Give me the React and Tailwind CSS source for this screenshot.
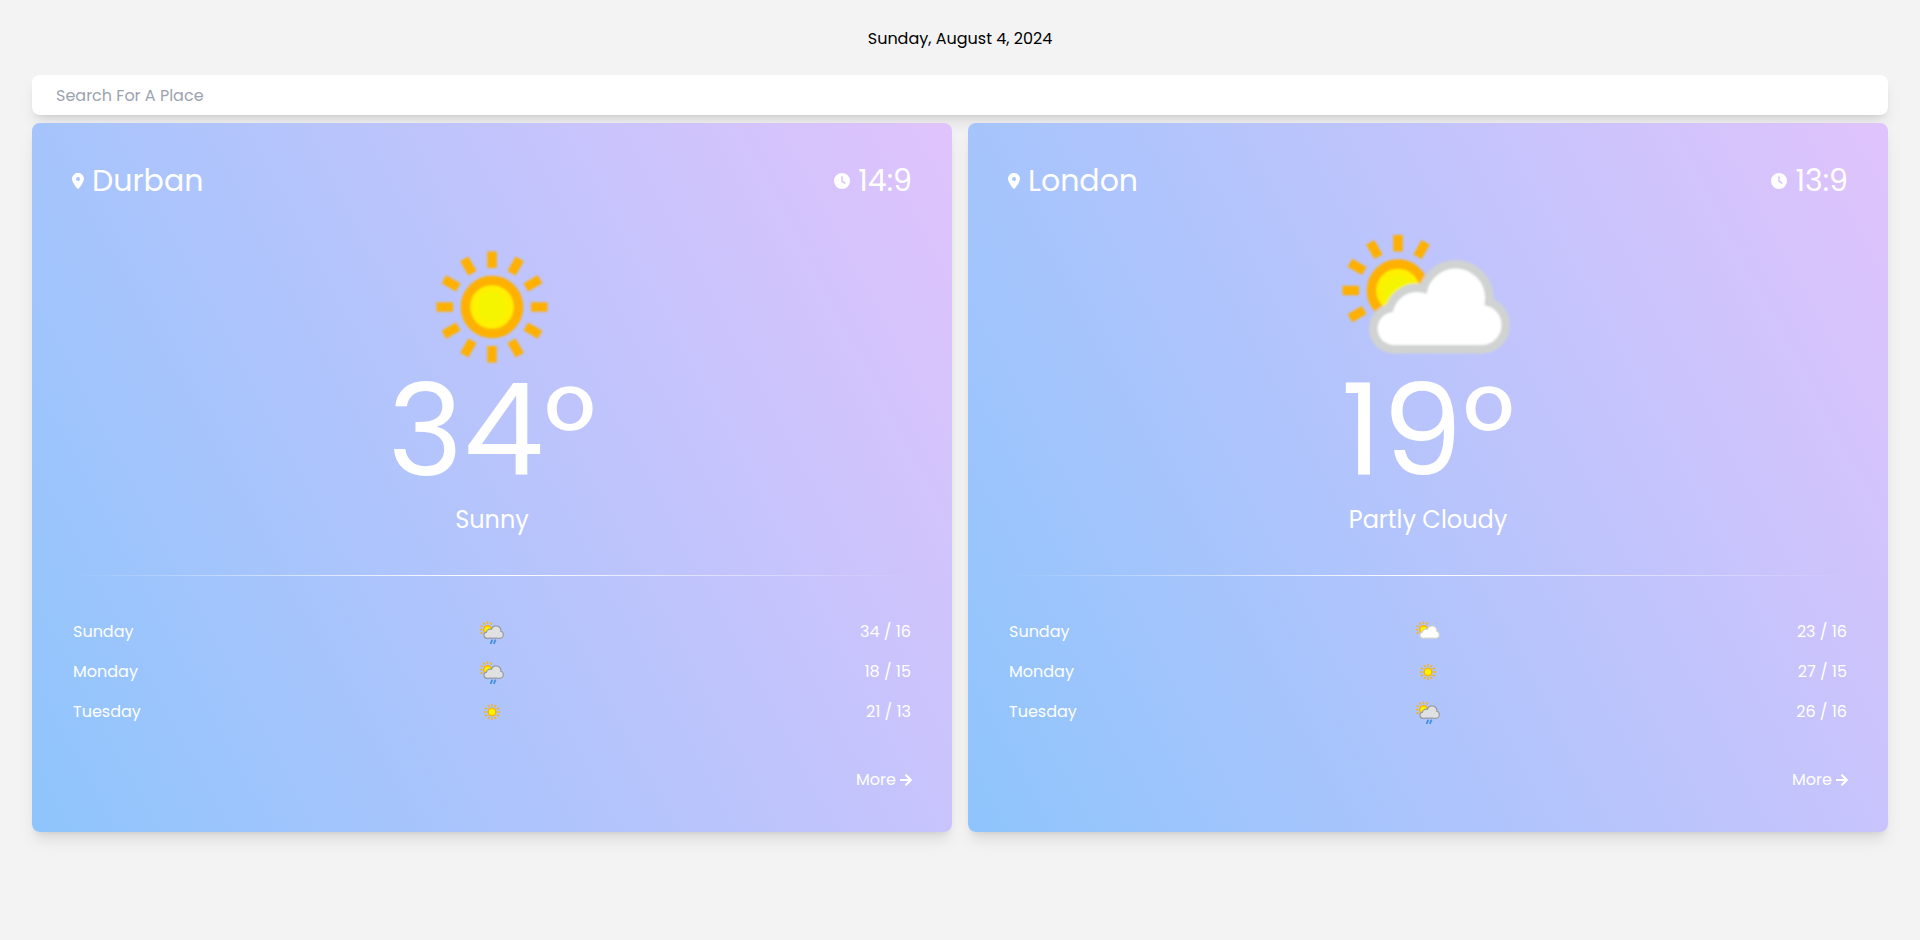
import { FaArrowRight } from "react-icons/fa";
import { FaClock, FaLocationDot } from "react-icons/fa6";

const SUN_RAYS = [0, 30, 60, 90, 120, 150, 180, 210, 240, 270, 300, 330];
const PARTIAL_RAYS = [240, 270, 300, 330, 0, 30];

function Sun({ cx, cy, rays }) {
  return (
    <g transform={`translate(${cx} ${cy})`}>
      {rays.map((angle) => (
        <rect key={angle} x="-4.7" y="-55.5" width="9.4" height="16.5" fill="#ffb000" transform={`rotate(${angle})`} />
      ))}
      <circle r="26.5" fill="#fff000" stroke="#ffb000" strokeWidth="9.5" />
      <circle r="15" fill="#f5f500" />
    </g>
  );
}

function CloudShape() {
  return (
    <>
      <circle cx="123.7" cy="87" r="29.5" />
      <circle cx="85" cy="105.5" r="24.5" />
      <circle cx="62" cy="117.5" r="16.5" />
      <circle cx="149.5" cy="114" r="20" />
      <rect x="62" y="105" width="88" height="29" />
    </>
  );
}

function Cloud({ fill, stroke }) {
  return (
    <>
      <g fill={stroke} stroke={stroke} strokeWidth="17" strokeLinejoin="round">
        <CloudShape />
      </g>
      <g fill={fill}>
        <CloudShape />
      </g>
    </>
  );
}

function WeatherArt({ kind }) {
  if (kind === "sunny") {
    return <Sun cx={96} cy={96} rays={SUN_RAYS} />;
  }
  const rain = kind === "rain";
  return (
    <>
      <Sun cx={66} cy={79.5} rays={PARTIAL_RAYS} />
      <Cloud fill={rain ? "#e0e1e3" : "#ffffff"} stroke={rain ? "#999b9f" : "#d0d3d2"} />
      {rain && (
        <g stroke="#3f8fdc" strokeWidth="12">
          <path d="M99 148 L86 178" />
          <path d="M121 148 L108 178" />
        </g>
      )}
    </>
  );
}

function Card({ city, time, kind, temp, condition, forecast }) {
  return (
    <article className="flex flex-col rounded-lg bg-[linear-gradient(62deg,#8ec5fc_0%,#e0c3fc_100%)] p-10 text-white shadow-lg">
      <header className="flex items-center justify-between text-3xl">
        <h2 className="flex items-center gap-2">
          <FaLocationDot className="h-4 w-3" aria-hidden="true" />
          {city}
        </h2>
        <p className="flex items-center gap-2">
          <FaClock className="size-4" aria-hidden="true" />
          {time}
        </p>
      </header>

      <svg viewBox="0 12 192 150" className="mt-6 h-[150px] w-48 self-center" role="img" aria-label={condition}>
        <defs>
          <filter id={`soft-${city}`}>
            <feGaussianBlur stdDeviation="0.9" />
          </filter>
        </defs>
        <g filter={`url(#soft-${city})`}>
          <WeatherArt kind={kind} />
        </g>
      </svg>
      <p className="text-center text-[128px] leading-[116px]">{temp}°</p>
      <p className="mt-3 text-center text-2xl leading-[38px]">{condition}</p>

      <hr className="mt-9 h-px border-0 bg-[linear-gradient(90deg,transparent,white,transparent)]" />

      <table className="mt-9 w-full table-fixed">
        <tbody>
          {forecast.map((row) => (
            <tr key={row.day} className="h-10">
              <th scope="row" className="p-px text-left font-normal">{row.day}</th>
              <td className="p-px">
                <svg viewBox="0 0 192 192" className="mx-auto size-7" aria-hidden="true">
                  <WeatherArt kind={row.kind} />
                </svg>
              </td>
              <td className="p-px text-right">{row.range}</td>
            </tr>
          ))}
        </tbody>
      </table>

      <a href="#" className="mt-9 flex items-center gap-1 self-end">
        More
        <FaArrowRight className="h-3.5 w-3" aria-hidden="true" />
      </a>
    </article>
  );
}

const PLACES = [
  {
    city: "Durban",
    time: "14:9",
    kind: "sunny",
    temp: 34,
    condition: "Sunny",
    forecast: [
      { day: "Sunday", kind: "rain", range: "34 / 16" },
      { day: "Monday", kind: "rain", range: "18 / 15" },
      { day: "Tuesday", kind: "sunny", range: "21 / 13" },
    ],
  },
  {
    city: "London",
    time: "13:9",
    kind: "partly",
    temp: 19,
    condition: "Partly Cloudy",
    forecast: [
      { day: "Sunday", kind: "partly", range: "23 / 16" },
      { day: "Monday", kind: "sunny", range: "27 / 15" },
      { day: "Tuesday", kind: "rain", range: "26 / 16" },
    ],
  },
];

export default function App() {
  return (
    <main className="min-h-screen bg-[#f3f3f3] px-8 pb-8 font-[Poppins,Inter,sans-serif] text-base text-black">
      <p className="pt-[27px] pb-6 text-center">Sunday, August 4, 2024</p>
      <input
        type="text"
        aria-label="Search for a place"
        placeholder="Search For A Place"
        className="block h-10 w-full rounded-lg bg-white px-6 shadow-lg outline-none placeholder:text-[#9ca3af]"
      />
      <div className="mt-2 grid gap-4 md:grid-cols-2">
        {PLACES.map((place) => (
          <Card key={place.city} {...place} />
        ))}
      </div>
    </main>
  );
}
